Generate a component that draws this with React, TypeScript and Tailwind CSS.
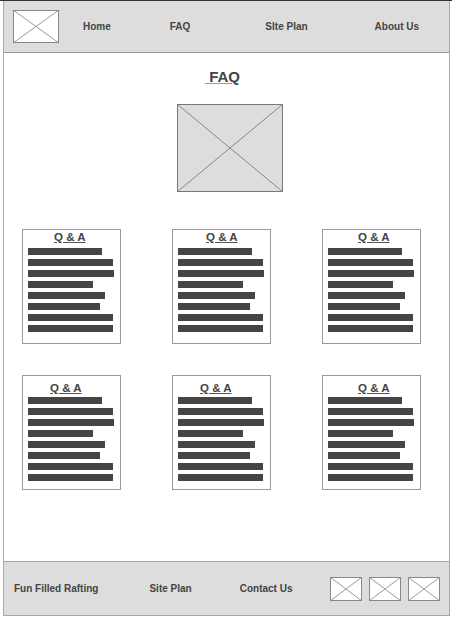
const barWidths = [74, 85, 86, 65, 77, 72, 85, 85];

function Placeholder({ className, fill, stroke, line }: { className: string; fill: string; stroke: string; line: string }) {
  return (
    <svg className={className} viewBox="0 0 100 100" preserveAspectRatio="none">
      <rect x="0" y="0" width="100" height="100" fill={fill} />
      <line x1="0" y1="0" x2="100" y2="100" stroke={line} strokeWidth={1} vectorEffect="non-scaling-stroke" />
      <line x1="100" y1="0" x2="0" y2="100" stroke={line} strokeWidth={1} vectorEffect="non-scaling-stroke" />
      <rect x="0" y="0" width="100" height="100" fill="none" stroke={stroke} strokeWidth={2} vectorEffect="non-scaling-stroke" />
    </svg>
  );
}

function QaCard({ titlePad, top }: { titlePad: string; top: "first" | "second" }) {
  return (
    <div className={`w-[99px] h-[115px] border border-[#9a9a9a] bg-white flex flex-col ${top === "first" ? "pt-[1px]" : "pt-[6px]"}`}>
      <div className={`h-[13px] leading-[13px] text-[11.5px] font-bold text-[#444] ${titlePad}`}>
        <span className="underline decoration-[#555]">Q &amp; A</span>
      </div>
      <div className={`flex flex-col gap-[4px] pl-[5px] ${top === "first" ? "mt-[4px]" : "mt-[2px]"}`}>
        {barWidths.map((w, i) => (
          <div key={i} className="h-[7px] bg-[#454545]" style={{ width: w }} />
        ))}
      </div>
    </div>
  );
}

export default function App() {
  return (
    <div className="w-[452px] h-[618px] bg-white font-['Liberation_Sans',Arial,sans-serif] overflow-hidden">
      <div className="h-px w-full bg-[#333]" />
      <div className="ml-[3px] w-[447px] border-x border-[#a8a8a8] flex flex-col">
        {/* Header */}
        <div className="h-[52px] bg-[#dddddd] border-b border-[#999] flex items-center text-[10px] font-bold text-[#444]">
          <Placeholder className="ml-[9px] w-[46px] h-[33px]" fill="#fff" stroke="#888" line="#999" />
          <span className="ml-[24px]">Home</span>
          <span className="ml-[59px]">FAQ</span>
          <span className="ml-[75px]">SIte Plan</span>
          <span className="ml-[67px]">About Us</span>
        </div>

        {/* Main */}
        <div className="h-[508px] pt-[15px] flex flex-col">
          <div className="pl-[201px] h-[18px] leading-[18px] text-[15px] font-bold text-[#444]">
            <span className="underline decoration-[#999]">{"\u00a0"}FAQ</span>
          </div>
          <Placeholder className="ml-[173px] mt-[18px] w-[106px] h-[88px]" fill="#dddddd" stroke="#777" line="#888" />
          <div className="mt-[37px] flex pl-[18px] gap-[51px]">
            <QaCard titlePad="pl-[31px]" top="first" />
            <QaCard titlePad="pl-[33px]" top="first" />
            <QaCard titlePad="pl-[35px]" top="first" />
          </div>
          <div className="mt-[31px] flex pl-[18px] gap-[51px]">
            <QaCard titlePad="pl-[27px]" top="second" />
            <QaCard titlePad="pl-[27px]" top="second" />
            <QaCard titlePad="pl-[35px]" top="second" />
          </div>
        </div>

        {/* Footer */}
        <div className="h-[55px] bg-[#dddddd] border-y border-[#a8a8a8] flex items-center text-[10px] font-bold text-[#444]">
          <span className="ml-[10px]">Fun Filled Rafting</span>
          <span className="ml-[51px]">Site Plan</span>
          <span className="ml-[48px]">Contact Us</span>
          <div className="ml-[38px] flex gap-[7px]">
            <Placeholder className="w-[32px] h-[24px]" fill="#fff" stroke="#888" line="#999" />
            <Placeholder className="w-[32px] h-[24px]" fill="#fff" stroke="#888" line="#999" />
            <Placeholder className="w-[32px] h-[24px]" fill="#fff" stroke="#888" line="#999" />
          </div>
        </div>
      </div>
    </div>
  );
}
